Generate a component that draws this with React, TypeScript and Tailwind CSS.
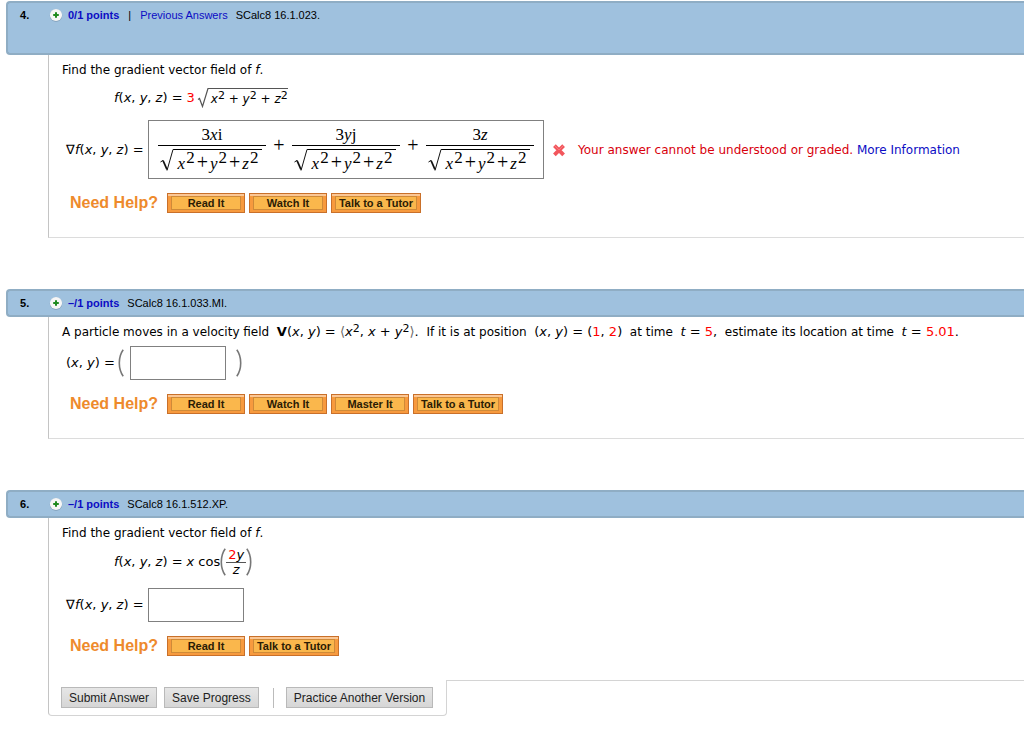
import type { ReactNode } from 'react'

interface QuestionProps {
  number: number
  points: string
  source: string
  previousAnswers?: boolean
  last?: boolean
  children: ReactNode
}

const PlusIcon = () => (
  <svg className="w-3.5 h-3.5" viewBox="0 0 14 14" aria-hidden="true">
    <circle cx="7" cy="7.5" r="6.2" fill="#7d9cb5" />
    <circle cx="7" cy="7" r="6.1" fill="#f6f6f6" />
    <path d="M7 4.2v5.6M4.2 7h5.6" stroke="#1f8a1f" strokeWidth="2" />
  </svg>
)

const WrongIcon = () => (
  <svg className="w-3.5 h-3.5" viewBox="0 0 14 14" role="img" aria-label="Incorrect">
    <path d="M2.4 2.7l9.2 9.2M11.6 2.7l-9.2 9.2" stroke="#f2565c" strokeWidth="3.8" />
    <path d="M3 3l4 4 4-4" fill="none" stroke="#f77b7f" strokeWidth="1" />
  </svg>
)

const Paren = ({ right = false }: { right?: boolean }) => (
  <svg className="h-7 w-1.5" viewBox="0 0 6 28" aria-hidden="true">
    <path
      d={right ? 'M.8 .8C6 8 6 20 .8 27.2' : 'M5.2 .8C0 8 0 20 5.2 27.2'}
      fill="none"
      stroke="#777"
      strokeWidth="1.6"
    />
  </svg>
)

const Question = ({ number, points, source, previousAnswers, last, children }: QuestionProps) => (
  <section>
    <header
      className={`ml-1.5 flex items-start rounded-l border-2 border-r-0 border-[#8fadc4] bg-[#9fc1de] pl-3 pt-1 font-['Liberation_Sans',sans-serif] text-[11px] leading-4 ${
        previousAnswers ? 'h-[54px]' : 'h-7'
      }`}
    >
      <h2 className="w-[29px] font-bold">{number}.</h2>
      <div className="flex items-center">
        <PlusIcon />
        <a href="#points" className="ml-[5px] font-bold text-[#0c0cc4]">{points}</a>
        {previousAnswers && (
          <>
            <span className="mx-[9px]">|</span>
            <a href="#previous" className="text-[#0c0cc4]">Previous Answers</a>
          </>
        )}
        <span className="ml-2">{source}</span>
      </div>
    </header>
    <div className={`ml-12 border-l border-[#c4c4c4] pl-[13px] pt-[5px] pb-6 ${last ? '' : 'border-b border-b-[#dcdcdc]'}`}>
      {children}
    </div>
  </section>
)

const NeedHelp = ({ items }: { items: string[] }) => (
  <div className="mt-3.5 flex h-5 items-center gap-1 pl-2 font-['Liberation_Sans',sans-serif] font-bold">
    <span className="w-[93px] text-base leading-5 text-[#ee8a2c]">Need Help?</span>
    {items.map((item) => (
      <button
        key={item}
        type="button"
        className={`h-5 border border-[#c9702a] bg-[#f79a3e] px-[3px] py-[2px] text-[11px] leading-[14px] shadow-[inset_0_2px_0_#fbc795] ${
          item === 'Talk to a Tutor' ? 'w-[90px]' : 'w-[78px]'
        }`}
      >
        <span className="flex h-3.5 items-center justify-center border border-[#cf8a38] bg-[#fab74c] whitespace-nowrap text-[#2a1c05]">
          {item}
        </span>
      </button>
    ))}
  </div>
)

const Sq = () => <sup className="-top-1 text-[11px]">2</sup>

const BigSq = () => <sup className="-top-1.5 ml-px text-[17px]">2</sup>

const BigPlus = () => <span className="mx-[2px] text-[20px] leading-5">+</span>

const Formula = ({ children }: { children: ReactNode }) => (
  <span className="text-[13px] whitespace-nowrap">{children}</span>
)

const Fxyz = () => (
  <Formula>
    <i>f</i>(<i>x</i>, <i>y</i>, <i>z</i>) =
  </Formula>
)

const Gradient = () => (
  <span className="w-[86px] pl-1 whitespace-nowrap">
    <span className="font-['Liberation_Serif',serif] text-[13px]">∇</span>
    <Fxyz />
  </span>
)

const Term = ({ children }: { children: ReactNode }) => (
  <div className="flex w-[108px] flex-col items-center">
    <div className="h-5 leading-5">{children}</div>
    <div className="flex w-full border-t border-black pt-[3px] pl-[2px] pr-1">
      <svg className="h-[23px] w-[14px] shrink-0" viewBox="0 0 14 23" aria-hidden="true">
        <path d="M.5 13l2.5-1.6" fill="none" stroke="#111" strokeWidth="1" />
        <path d="M3 11.5l4 9" fill="none" stroke="#111" strokeWidth="1.8" />
        <path d="M7 21.5L13 .5h1" fill="none" stroke="#111" strokeWidth="1" />
      </svg>
      <div className="h-[23px] flex-1 border-t border-black pt-[2px] text-center leading-5 whitespace-nowrap">
        <i>x</i><BigSq /><BigPlus /><i>y</i><BigSq /><BigPlus /><i>z</i><BigSq />
      </div>
    </div>
  </div>
)

const actionButton =
  'h-[21px] border border-[#b9b9b9] bg-linear-to-b from-[#e6e6e6] to-[#d6d6d6] px-[7px] text-[12px] leading-[18px] text-[#222] whitespace-nowrap'

const App = () => {
  return (
    <main className="min-h-screen bg-white pt-px font-['DejaVu_Sans',sans-serif] text-[12px] leading-5 text-black">
      <div className="flex flex-col gap-[51px]">
        <Question number={4} points="0/1 points" source="SCalc8 16.1.023." previousAnswers>
          <p>Find the gradient vector field of <i>f</i>.</p>
          <div className="mt-1 flex h-7 items-center pl-[52px]">
            <Fxyz />
            <span className="ml-1 text-[13px] text-[#f00]">3</span>
            <svg className="ml-[2px] h-5 w-3" viewBox="0 0 12 20" aria-hidden="true">
              <path d="M1 11.5l1.5-1 3 8L11 .5h1" fill="none" stroke="#555" strokeWidth="1.2" />
            </svg>
            <span className="h-5 border-t border-[#555] pl-[2px]">
              <i>x</i><Sq /> + <i>y</i><Sq /> + <i>z</i><Sq />
            </span>
          </div>
          <div className="mt-2 flex items-center">
            <Gradient />
            <div
              role="math"
              className="flex h-[59px] items-center border border-[#808080] px-[9px] pb-[3px] font-['Liberation_Serif',serif] text-[17px]"
            >
              <Term>3<i>x</i>i</Term>
              <span className="w-[26px] pb-1.5 text-center text-[20px]">+</span>
              <Term>3<i>y</i>j</Term>
              <span className="w-[26px] pb-1.5 text-center text-[20px]">+</span>
              <Term>3<i>z</i></Term>
            </div>
            <div className="ml-2 flex items-center">
              <WrongIcon />
              <p className="ml-3 text-[#d8000c]">
                Your answer cannot be understood or graded.{' '}
                <a href="#info" className="text-[#0c0cc4]">More Information</a>
              </p>
            </div>
          </div>
          <NeedHelp items={['Read It', 'Watch It', 'Talk to a Tutor']} />
        </Question>

        <Question number={5} points="–/1 points" source="SCalc8 16.1.033.MI.">
          <p>
            A particle moves in a velocity field &nbsp;
            <Formula>
              <b>V</b>(<i>x</i>, <i>y</i>) = <span className="text-[#666]">⟨</span><i>x</i><Sq />, <i>x</i> + <i>y</i><Sq />
              <span className="text-[#666]">⟩</span>.
            </Formula>{' '}
            &nbsp;If it is at position &nbsp;
            <Formula>
              (<i>x</i>, <i>y</i>) = (<span className="text-[#f00]">1</span>, <span className="text-[#f00]">2</span>)
            </Formula>{' '}
            &nbsp;at time &nbsp;
            <Formula>
              <i>t</i> = <span className="text-[#f00]">5</span>,
            </Formula>{' '}
            &nbsp;estimate its location at time &nbsp;
            <Formula>
              <i>t</i> = <span className="text-[#f00]">5.01</span>.
            </Formula>
          </p>
          <div className="mt-1 flex items-center">
            <label htmlFor="location" className="w-14 pl-1 whitespace-nowrap">
              <Formula>(<i>x</i>, <i>y</i>) =</Formula>
            </label>
            <Paren />
            <input id="location" type="text" className="ml-1.5 mr-2.5 h-[34px] w-24 border border-[#808080]" />
            <Paren right />
          </div>
          <NeedHelp items={['Read It', 'Watch It', 'Master It', 'Talk to a Tutor']} />
        </Question>

        <Question number={6} points="–/1 points" source="SCalc8 16.1.512.XP." last>
          <p>Find the gradient vector field of <i>f</i>.</p>
          <div className="mt-[5px] flex h-7 items-center pl-[52px]">
            <Fxyz />
            <span className="ml-1 text-[13px]"><i>x</i> cos</span>
            <Paren />
            <span className="flex flex-col text-center text-[13px] leading-[14px]">
              <span className="border-b border-[#555] px-[2px]">
                <span className="text-[#f00]">2</span><i>y</i>
              </span>
              <i>z</i>
            </span>
            <Paren right />
          </div>
          <div className="mt-3 flex items-center">
            <label htmlFor="gradient" className="flex"><Gradient /></label>
            <input id="gradient" type="text" className="h-[34px] w-24 border border-[#808080]" />
          </div>
          <NeedHelp items={['Read It', 'Talk to a Tutor']} />
        </Question>
      </div>

      <footer className="ml-12 flex items-start">
        <div className="flex h-9 items-center rounded-b border border-t-0 border-[#d4d4d4] border-l-[#c4c4c4] pl-3 pr-[13px] font-['Liberation_Sans',sans-serif]">
          <button type="submit" className={actionButton}>Submit Answer</button>
          <button type="button" className={`ml-[7px] ${actionButton}`}>Save Progress</button>
          <span className="mr-3 ml-3.5 h-5 w-px bg-[#bbb]" />
          <button type="button" className={actionButton}>Practice Another Version</button>
        </div>
        <div className="flex-1 border-t border-[#d4d4d4]" />
      </footer>
    </main>
  )
}

export default App
